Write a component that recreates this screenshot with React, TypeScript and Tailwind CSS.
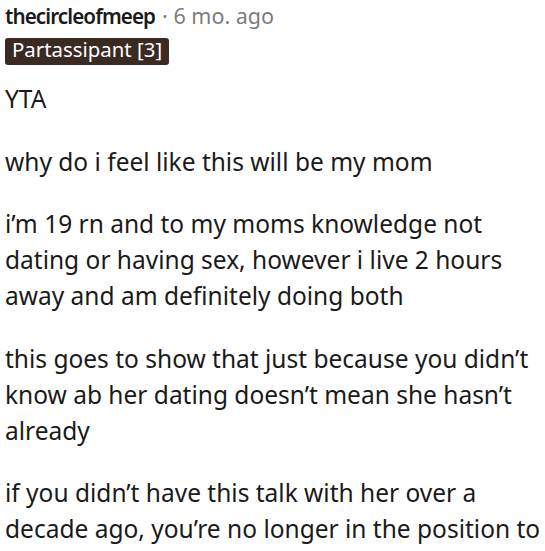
export default function App() {
  const paras = [
    "YTA",
    "why do i feel like this will be my mom",
    "i’m 19 rn and to my moms knowledge not dating or having sex, however i live 2 hours away and am definitely doing both",
    "this goes to show that just because you didn’t know ab her dating doesn’t mean she hasn’t already",
    "if you didn’t have this talk with her over a decade ago, you’re no longer in the position to",
  ];
  return (
    <div className="bg-white w-[545px] h-[551px] overflow-hidden pl-[5px] text-[#1a1a1b]" style={{ fontFamily: '"Noto Sans", sans-serif' }}>
      <div className="flex items-center h-[31px] pt-[1px] text-[20.6px] leading-[30px] whitespace-nowrap">
        <span className="font-semibold tracking-[-0.9px]">thecircleofmeep</span>
        <span className="text-[#7c7c7c] text-[21.5px] ml-[7px]">· 6 mo. ago</span>
      </div>
      <div className="mt-[7px] flex">
        <span className="bg-[#3b2a22] text-white text-[20.4px] leading-[23px] pb-[4px] px-[7px] rounded-[3px]">
          Partassipant [3]
        </span>
      </div>
      <div className="mt-[16px] text-[24.5px] leading-[36px]">
        {paras.map((p, i) => (
          <p key={i} className="mb-[26.5px]">{p}</p>
        ))}
      </div>
    </div>
  );
}
